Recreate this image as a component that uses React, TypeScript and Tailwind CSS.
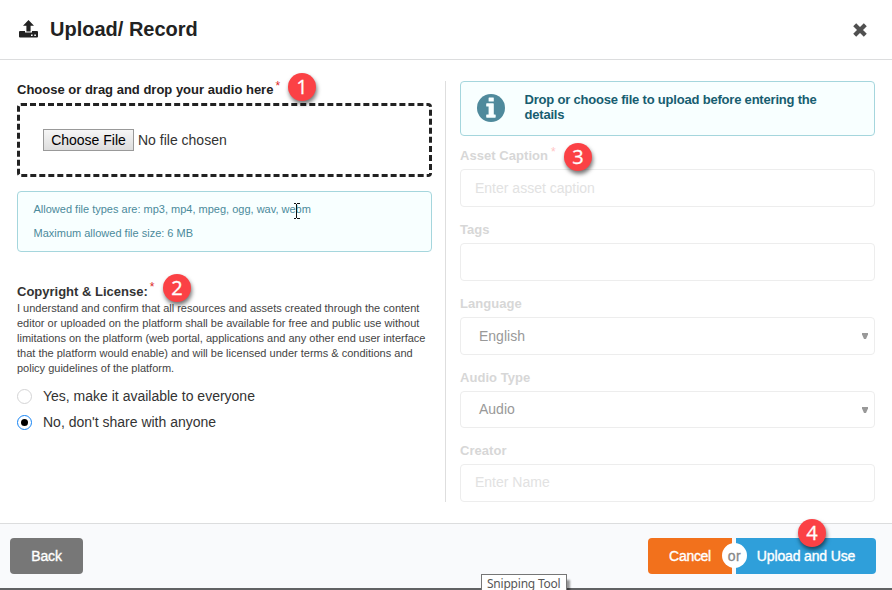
import type { ReactNode } from "react";

function Marker({ n, className }: { n: number; className: string }) {
  return (
    <span
      className={`absolute flex h-7 w-7 items-center justify-center rounded-full bg-[#fb4145] font-['Open_Sans','Noto_Sans',sans-serif] text-[20px] leading-none font-normal tracking-normal text-white shadow-[1px_3px_4px_rgba(0,0,0,0.55)] [-webkit-text-stroke:0.3px_white] ${className}`}
    >
      {n}
    </span>
  );
}

function UploadIcon() {
  return (
    <svg width="19" height="18" viewBox="0 0 19 18" fill="#222" className="block">
      <path d="M9.5 0 15 5.8H11.6V11.4H7.4V5.8H4Z" />
      <path
        fillRule="evenodd"
        d="M1 10.9H6V12.6H13V10.9H18Q19 10.9 19 11.9V16.5Q19 17.5 18 17.5H1Q0 17.5 0 16.5V11.9Q0 10.9 1 10.9ZM12 14.5V15.9H13.6V14.5ZM15.3 14.5V15.9H16.9V14.5Z"
      />
    </svg>
  );
}

function InfoIcon() {
  return (
    <svg width="28" height="28" viewBox="0 0 28 28" className="mt-[12px] ml-[0.7px] shrink-0">
      <circle cx="14" cy="14" r="14" fill="#4f8a9c" />
      <path
        fill="#f8ffff"
        d="M12.1 3.4H16.3Q16.8 3.4 16.8 3.9V7.1Q16.8 7.6 16.3 7.6H12.1Q11.6 7.6 11.6 7.1V3.9Q11.6 3.4 12.1 3.4ZM9.8 9.3H16.2Q16.8 9.3 16.8 9.9V20.4H18.1Q18.7 20.4 18.7 21V23.1Q18.7 23.7 18.1 23.7H9.8Q9.2 23.7 9.2 23.1V21Q9.2 20.4 9.8 20.4H11.6V12.6H9.8Q9.2 12.6 9.2 12V9.9Q9.2 9.3 9.8 9.3Z"
      />
    </svg>
  );
}

function Field({ label, required, h, pad, select, marker, children }: { label: string; required?: boolean; h: string; pad: string; select?: boolean; marker?: ReactNode; children?: ReactNode }) {
  return (
    <div>
      <div className="relative flex h-[21px] text-[13px] leading-[15px] font-bold tracking-[0.05px] text-[#d7d7d7]">
        {label}
        {required && <span className="-mt-[3px] ml-[3px] text-[12px] font-normal text-[#ffc4c4]">*</span>}
        {marker}
      </div>
      <div className={`flex items-center justify-between rounded-[4px] border border-[#ededed] pr-[6px] text-[14px] ${h} ${pad}`}>
        <span>{children}</span>
        {select && (
          <svg width="6" height="6" viewBox="0 0 6 6" fill="#999">
            <path d="M0 0H6V1.5L4 6H2L0 1.5Z" />
          </svg>
        )}
      </div>
    </div>
  );
}

export default function App() {
  return (
    <div className="relative flex h-[590px] w-[892px] flex-col overflow-hidden bg-white font-['Liberation_Sans',Arial,sans-serif] text-[#333]">
      <header className="flex h-[60px] shrink-0 items-center border-b border-[#dcddde] pb-[1px] pr-[25px] pl-[19px]">
        <UploadIcon />
        <h1 className="ml-[12px] text-[20px] leading-6 font-bold text-[#222]">Upload/ Record</h1>
        <svg width="14" height="14" viewBox="0 0 14 14" className="mt-px ml-auto" stroke="#505050" strokeWidth="4.2" strokeLinecap="square">
          <path d="M3.2 3.2 10.8 10.8M10.8 3.2 3.2 10.8" />
        </svg>
      </header>

      <main className="flex h-[463px] shrink-0 pt-[21px] pl-[17px]">
        <section className="w-[415px]">
          <div className="relative flex h-[22px] text-[13px] leading-[17px] font-bold text-[#222]">
            Choose or drag and drop your audio here
            <span className="-mt-[3px] ml-[2px] text-[12px] font-normal text-[#db2828]">*</span>
            <Marker n={1} className="top-[-8px] left-[271px]" />
          </div>
          <div className="flex h-[74px] items-center rounded-[4px] border-3 border-dashed border-[#222] pl-[23px]">
            <button className="h-[22px] w-[91px] border border-[#999] bg-linear-to-b from-[#f6f6f6] to-[#dddddd] text-[14px] leading-[18px] whitespace-nowrap text-black">
              Choose File
            </button>
            <span className="ml-[4px] text-[14px] text-[#333]">No file chosen</span>
          </div>
          <div className="mt-[14px] h-[61px] rounded-[4px] border border-[#a5d6dd] bg-[#f8ffff] pt-[5px] pl-[15.5px] text-[11px] leading-6 text-[#4b8a9b]">
            <p>Allowed file types are: mp3, mp4, mpeg, ogg, wav, webm</p>
            <p>Maximum allowed file size: 6 MB</p>
          </div>

          <div className="relative mt-[30px] flex h-[19px] text-[13px] leading-[19px] font-bold text-[#333]">
            Copyright &amp; License:
            <span className="-mt-[4px] ml-[2px] text-[12px] font-normal text-[#db2828]">*</span>
            <Marker n={2} className="top-[-8px] left-[146px]" />
          </div>
          <p className="text-[11px] leading-[15px] whitespace-nowrap text-[#444]">
            I understand and confirm that all resources and assets created through the content
            <br />
            editor or uploaded on the platform shall be available for free and public use without
            <br />
            limitations on the platform (web portal, applications and any other end user interface
            <br />
            that the platform would enable) and will be licensed under terms &amp; conditions and
            <br />
            policy guidelines of the platform.
          </p>
          <label className="mt-[12px] flex h-[17px] items-center text-[14px]">
            <span className="mr-[11px] h-[15px] w-[15px] rounded-full border border-[#d4d4d5]" />
            Yes, make it available to everyone
          </label>
          <label className="mt-[9px] flex h-[17px] items-center text-[14px]">
            <span className="mr-[11px] flex h-[15px] w-[15px] items-center justify-center rounded-full border border-[#1684f4]">
              <span className="h-[7px] w-[7px] rounded-full bg-black" />
            </span>
            No, don&apos;t share with anyone
          </label>
        </section>

        <div className="mr-[14px] ml-[13px] h-[421px] w-px bg-[#dedede]" />

        <section className="w-[415px]">
          <div className="flex h-[55px] rounded-[4px] border border-[#a5d6dd] bg-[#f8ffff] pl-[15px]">
            <InfoIcon />
            <p className="mt-[10px] ml-[19.8px] text-[13px] leading-[15px] font-bold tracking-[-0.2px] whitespace-nowrap text-[#175d70]">
              Drop or choose file to upload before entering the
              <br />
              details
            </p>
          </div>
          <div className="mt-[12px] flex flex-col gap-[15px]">
            <Field label="Asset Caption" required h="h-[38px]" pad="pl-[14px] text-[#e2e2e2]" marker={<Marker n={3} className="top-[-5px] left-[104px]" />}>
              Enter asset caption
            </Field>
            <Field label="Tags" h="h-[38px]" pad="pl-[14px]" />
            <Field label="Language" h="h-[38px]" pad="pl-[18px] text-[#999]" select>
              English
            </Field>
            <Field label="Audio Type" h="h-[37px]" pad="pl-[18px] text-[#999]" select>
              Audio
            </Field>
            <Field label="Creator" h="h-[38px]" pad="pl-[14px] pb-[2px] text-[#e2e2e2]">
              Enter Name
            </Field>
          </div>
        </section>
      </main>

      <footer className="flex h-[67px] shrink-0 items-start border-t border-b-2 border-t-[#dcddde] border-b-[#616264] bg-[#f9fafc] pt-[14px] pr-[16px] pl-[10px] text-[14px] leading-9 tracking-[-0.15px] text-white">
        <button className="h-9 w-[73px] rounded-[4px] bg-[#777] [-webkit-text-stroke:0.35px_white]">Back</button>
        <div className="relative ml-auto flex gap-[4px]">
          <button className="h-9 w-[84px] rounded-l-[4px] bg-[#f2711c] tracking-[-0.3px] [-webkit-text-stroke:0.35px_white]">Cancel</button>
          <button className="h-9 w-[140px] rounded-r-[4px] bg-[#2f9fda] [-webkit-text-stroke:0.35px_white]">Upload and Use</button>
          <span className="absolute top-[5px] left-[74px] flex h-[25px] w-[25px] items-center justify-center rounded-full bg-white text-[14px] leading-none tracking-[0.5px] text-[#888] [-webkit-text-stroke:0.3px_#888]">
            or
          </span>
          <Marker n={4} className="top-[-19px] left-[150px]" />
        </div>
      </footer>

      <svg className="absolute top-[203px] left-[293px]" width="8" height="16" viewBox="0 0 8 16" fill="none" stroke="#111" strokeWidth="1" shapeRendering="crispEdges">
        <path d="M0.5 0.5H3M4 0.5H7M3.5 1V15M0.5 15.5H3M4 15.5H7" />
      </svg>
      <div className="absolute top-[574px] left-[481px] h-[20px] w-[86px] border border-[#767676] bg-white pl-[5px] font-['Noto_Sans','Open_Sans',sans-serif] text-[12px] leading-[18px] tracking-[-0.22px] whitespace-nowrap text-[#575757] shadow-[3px_6px_2px_rgba(0,0,0,0.4)]">
        Snipping Tool
      </div>
    </div>
  );
}
